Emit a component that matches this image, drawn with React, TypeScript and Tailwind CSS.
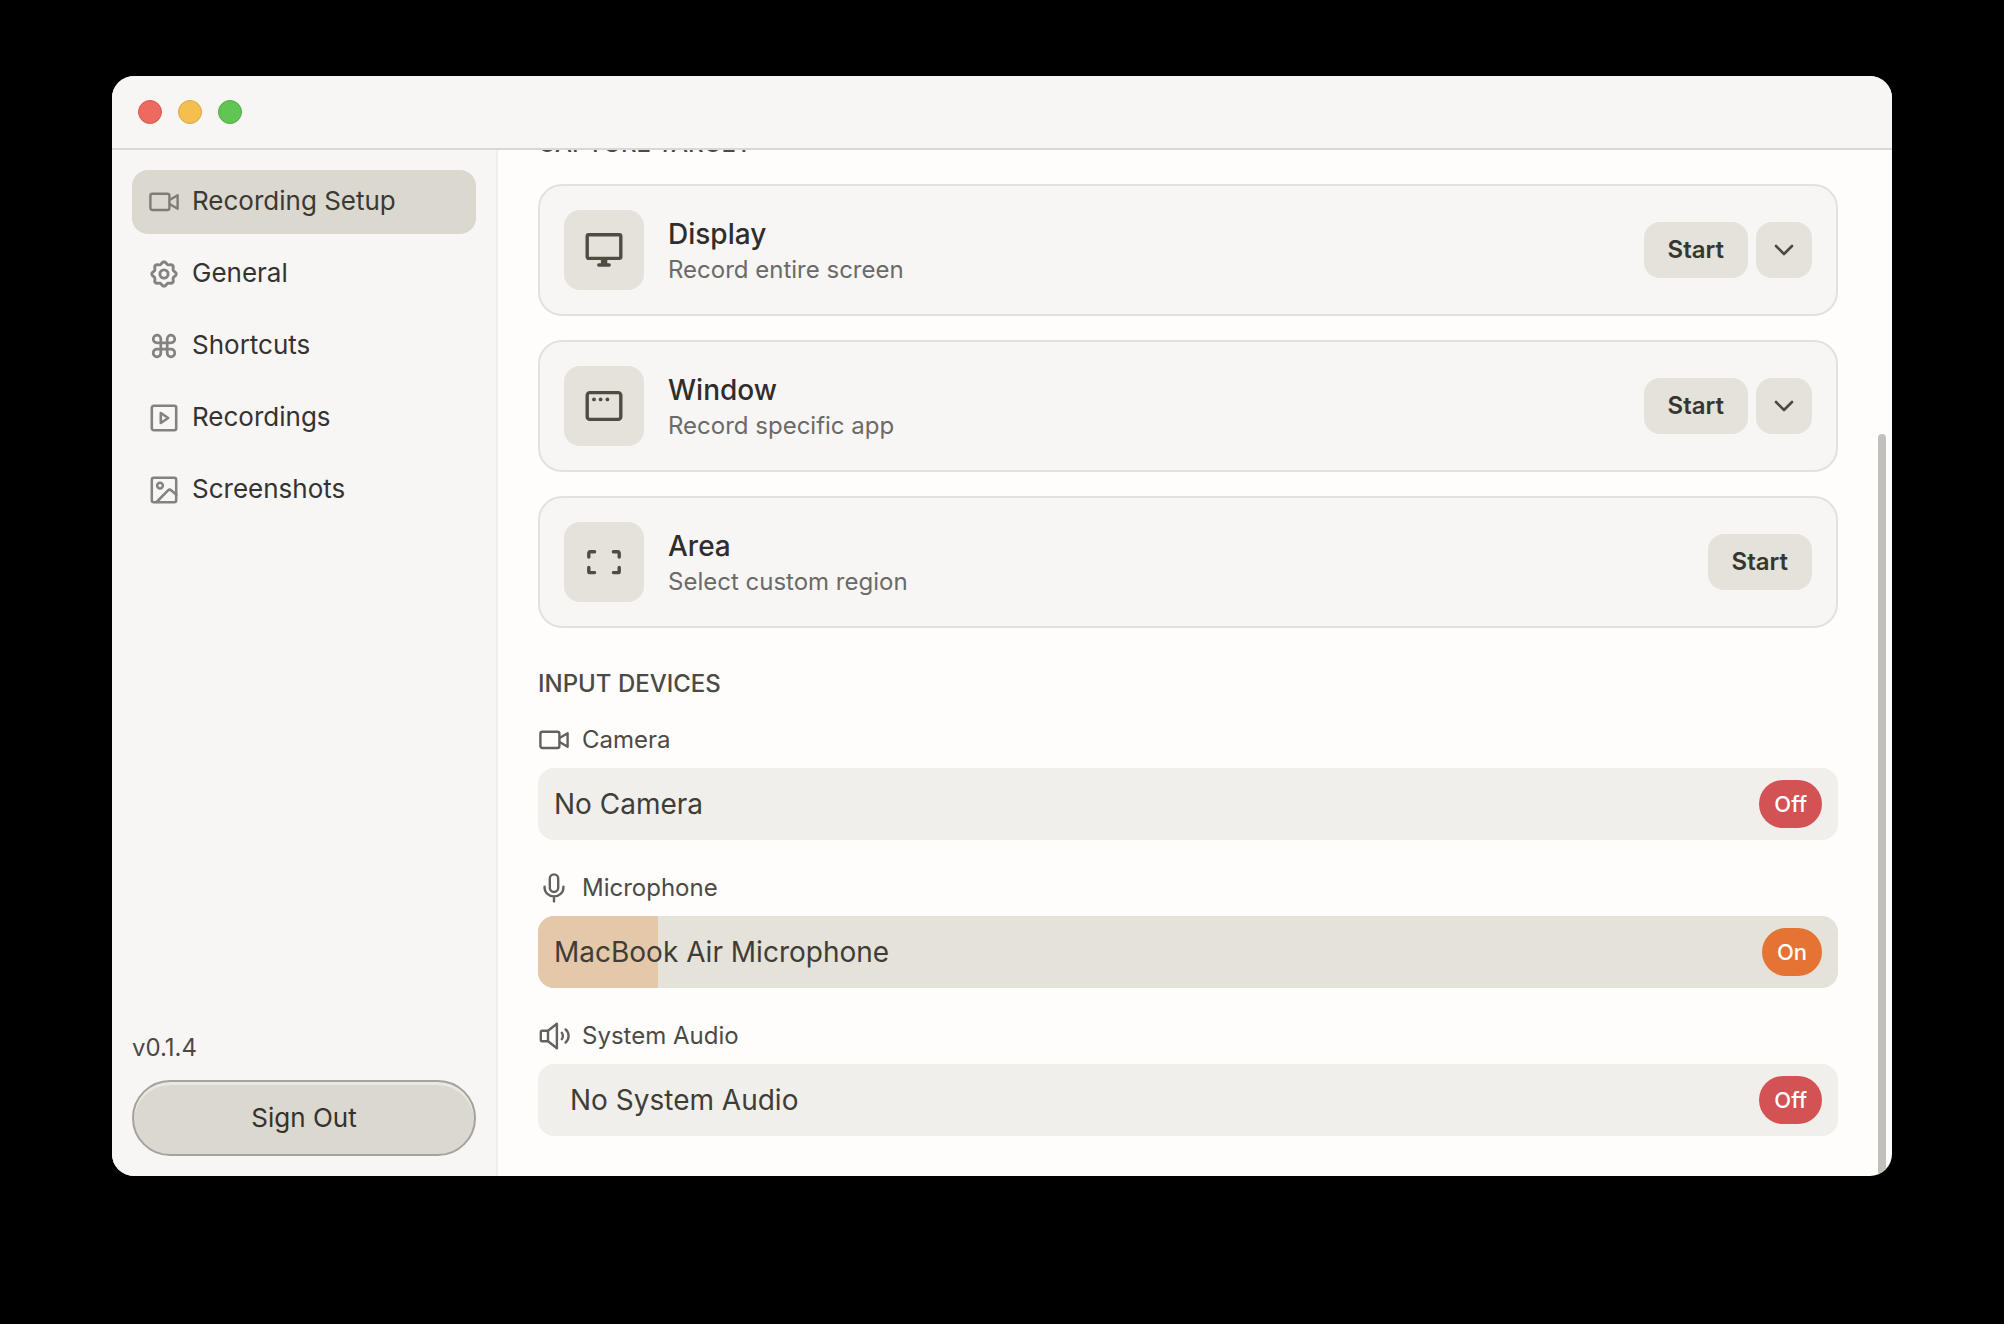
import type { ReactNode } from "react";

type IconProps = { className?: string };

function Stroke({ className, children, width = 2.6 }: IconProps & { children: ReactNode; width?: number }) {
  return (
    <svg
      aria-hidden="true"
      viewBox="0 0 32 32"
      fill="none"
      stroke="currentColor"
      strokeWidth={width}
      strokeLinecap="round"
      strokeLinejoin="round"
      className={className ?? "size-8 shrink-0"}
    >
      {children}
    </svg>
  );
}

const CameraIcon = () => (
  <Stroke width={2.4}>
    <rect x="2.4" y="7.8" width="19" height="16.2" rx="2" />
    <path d="M22 13.8l7.6-4.6v13.6L22 18.2" />
  </Stroke>
);

// Eight-lobed cog outline, sampled around the circle.
const cogPath =
  Array.from({ length: 96 }, (_, i) => {
    const a = (i / 96) * Math.PI * 2;
    const r = 11.1 + 1.1 * Math.cos(8 * a);
    return `${i ? "L" : "M"}${(16 + r * Math.sin(a)).toFixed(2)} ${(16 - r * Math.cos(a)).toFixed(2)}`;
  }).join("") + "Z";

const CogIcon = () => (
  <Stroke width={2.9}>
    <path d={cogPath} />
    <circle cx="16" cy="16" r="4.1" />
  </Stroke>
);

const CommandIcon = () => (
  <Stroke width={2.7}>
    <path d="M19.2 8.9v14.2a3.8 3.8 0 1 0 3.8-3.9H9a3.8 3.8 0 1 0 3.8 3.9V8.9A3.8 3.8 0 1 0 9 12.8h14a3.8 3.8 0 1 0-3.8-3.9Z" />
  </Stroke>
);

const PlayBoxIcon = () => (
  <Stroke>
    <rect x="3.8" y="3.8" width="24.4" height="24.4" rx="2" />
    <path d="M12.8 11v10l7.4-5z" />
  </Stroke>
);

const PictureIcon = () => (
  <Stroke width={2.5}>
    <rect x="3.8" y="3.8" width="24.4" height="24.4" rx="2" />
    <circle cx="12" cy="11.6" r="2.9" />
    <path d="M8.6 28L19.8 16.6a2.6 2.6 0 0 1 3.6-.1l5 4.3" />
  </Stroke>
);

const MicIcon = () => (
  <Stroke width={2.4}>
    <rect x="11.8" y="2.4" width="8.4" height="17.6" rx="4.2" />
    <path d="M6.6 14.6v1.2a9.4 8.6 0 0 0 18.8 0v-1.2M16 24.6v4.8" />
  </Stroke>
);

const SpeakerIcon = () => (
  <Stroke width={2.4}>
    <path d="M10 10.8H4.2a1.4 1.4 0 0 0-1.4 1.4v7.6a1.4 1.4 0 0 0 1.4 1.4H10l8.9 7V3.8zM10 10.8v10.4" />
    <path d="M23.8 12.8c1.4 1.6 1.4 4.8 0 6.4M27.6 9.4c4 3.6 4 9.6 0 13.2" />
  </Stroke>
);

const ChevronIcon = () => (
  <Stroke>
    <path d="M8 12l8 8 8-8" />
  </Stroke>
);

function TileSvg({ children }: { children: ReactNode }) {
  return (
    <svg
      aria-hidden="true"
      viewBox="0 0 40 40"
      fill="none"
      stroke="currentColor"
      strokeWidth="3.4"
      strokeLinecap="round"
      strokeLinejoin="round"
      className="size-10"
    >
      {children}
    </svg>
  );
}

const DisplayIcon = () => (
  <TileSvg>
    <rect x="3.2" y="4.8" width="33.6" height="23.6" rx="1.6" />
    <path d="M14.8 35h10.4" />
    <path d="M16.9 29h6.4v5.4h-6.4z" fill="currentColor" stroke="none" />
  </TileSvg>
);

const WindowIcon = () => (
  <TileSvg>
    <rect x="3.2" y="6.6" width="33.6" height="26.8" rx="2.6" />
    <g fill="currentColor" stroke="none">
      <circle cx="10" cy="13.4" r="1.9" />
      <circle cx="16.6" cy="13.4" r="1.9" />
      <circle cx="23.4" cy="13.4" r="1.9" />
    </g>
  </TileSvg>
);

const AreaIcon = () => (
  <TileSvg>
    <path d="M4.8 15V11a1.2 1.2 0 0 1 1.2-1.2h4.6M29.4 9.8H34a1.2 1.2 0 0 1 1.2 1.2v4M35.2 25.4v4a1.2 1.2 0 0 1-1.2 1.2h-4.6M10.6 30.6H6a1.2 1.2 0 0 1-1.2-1.2v-4" />
  </TileSvg>
);

const navItems = [
  { label: "Recording Setup", icon: <CameraIcon />, active: true },
  { label: "General", icon: <CogIcon />, active: false },
  { label: "Shortcuts", icon: <CommandIcon />, active: false },
  { label: "Recordings", icon: <PlayBoxIcon />, active: false },
  { label: "Screenshots", icon: <PictureIcon />, active: false },
];

const targets = [
  { title: "Display", detail: "Record entire screen", icon: <DisplayIcon />, menu: true },
  { title: "Window", detail: "Record specific app", icon: <WindowIcon />, menu: true },
  { title: "Area", detail: "Select custom region", icon: <AreaIcon />, menu: false },
];

const devices = [
  { label: "Camera", value: "No Camera", icon: <CameraIcon />, on: false, level: 0, inset: false },
  { label: "Microphone", value: "MacBook Air Microphone", icon: <MicIcon />, on: true, level: 9.2, inset: false },
  { label: "System Audio", value: "No System Audio", icon: <SpeakerIcon />, on: false, level: 0, inset: true },
];

function Sidebar() {
  return (
    <aside className="flex w-[386px] shrink-0 flex-col border-r-2 border-[#efeeec] bg-[#f7f6f5] p-5">
      <nav className="flex flex-col gap-2">
        {navItems.map((item) => (
          <a
            key={item.label}
            href="#"
            aria-current={item.active ? "page" : undefined}
            className={`flex h-16 items-center gap-3 rounded-2xl px-4 text-[26px] leading-8 ${
              item.active ? "bg-[#dbd8d0] text-[#3c3932]" : "text-[#343331]"
            }`}
          >
            <span className={item.active ? "text-[#7f7c76]" : "text-[#83827f]"}>{item.icon}</span>
            <span className="pb-0.5">{item.label}</span>
          </a>
        ))}
      </nav>
      <p className="mt-auto mb-4 text-2xl text-[#4a4947]">v0.1.4</p>
      <button
        type="button"
        className="h-[76px] rounded-full border-2 border-[#a5a39e] bg-[#dbd8d0] pb-0.5 text-[26px] text-[#35322c] shadow-[inset_0_3px_1px_#ebe9e4]"
      >
        Sign Out
      </button>
    </aside>
  );
}

function TargetCard({ title, detail, icon, menu }: (typeof targets)[number]) {
  return (
    <div className="flex items-center rounded-3xl border-2 border-[#e2e1de] bg-[#f7f6f5] p-6">
      <div className="grid size-20 shrink-0 place-items-center rounded-2xl bg-[#e4e2da] text-[#504c42]">{icon}</div>
      <div className="ml-6 flex-1 pt-1">
        <h3 className="text-[28px] leading-9 font-medium text-[#2f2e2c]">{title}</h3>
        <p className="text-2xl leading-9 text-[#6b6a67]">{detail}</p>
      </div>
      <div className="flex gap-2">
        <button type="button" className="h-14 rounded-2xl bg-[#e4e2da] px-6 text-2xl font-semibold text-[#38352e]">
          Start
        </button>
        {menu && (
          <button
            type="button"
            aria-label={`Choose ${title.toLowerCase()}`}
            className="grid size-14 place-items-center rounded-2xl bg-[#e4e2da] text-[#4c4942]"
          >
            <ChevronIcon />
          </button>
        )}
      </div>
    </div>
  );
}

function DeviceRow({ label, value, icon, on, level, inset }: (typeof devices)[number]) {
  return (
    <div className="flex flex-col gap-3">
      <div className="flex items-center gap-3 text-2xl leading-8 text-[#4b4a47]">
        <span className="text-[#62615d]">{icon}</span>
        {label}
      </div>
      <div
        className={`relative flex h-[72px] items-center overflow-hidden rounded-2xl pr-4 ${
          on ? "bg-[#e4e2d9]" : "bg-[#f0efec]"
        }`}
      >
        {on && <div className="absolute inset-y-0 left-0 bg-[#e5c8aa]" style={{ width: `${level}%` }} />}
        <button
          type="button"
          aria-label={`${label}: ${value}`}
          className={`relative h-full flex-1 text-left text-[28px] text-[#403d37] ${inset ? "pl-8" : "pl-4"}`}
        >
          {value}
        </button>
        <button
          type="button"
          aria-pressed={on}
          className={`relative h-12 rounded-full px-[15px] text-[22px] font-medium text-white ${
            on ? "bg-[#e57434]" : "bg-[#d35253]"
          }`}
        >
          {on ? "On" : "Off"}
        </button>
      </div>
    </div>
  );
}

export default function App() {
  return (
    <div className="flex h-screen bg-black px-28 pt-[76px] pb-[148px] font-['Inter',sans-serif]">
      <div className="flex min-w-0 flex-1 flex-col overflow-hidden rounded-[22px] bg-[#fefdfb]">
        <header className="flex h-[74px] shrink-0 items-center gap-4 border-b-2 border-[#d9d8d6] bg-[#f7f6f5] pl-[26px]">
          <button type="button" aria-label="Close" className="size-6 rounded-full border border-[#d65a50] bg-[#ec6a5e]" />
          <button type="button" aria-label="Minimize" className="size-6 rounded-full border border-[#dba942] bg-[#f4bf4f]" />
          <button type="button" aria-label="Zoom" className="size-6 rounded-full border border-[#54ac47] bg-[#61c554]" />
        </header>
        <div className="flex min-h-0 flex-1">
          <Sidebar />
          <main className="relative flex min-w-0 flex-1 flex-col justify-end gap-10 overflow-hidden pr-[54px] pb-10 pl-10">
            <section className="flex flex-col gap-6">
              <h2 className="text-2xl leading-8 font-medium text-[#4b4a47]">CAPTURE TARGET</h2>
              {targets.map((target) => (
                <TargetCard key={target.title} {...target} />
              ))}
            </section>
            <section className="flex flex-col gap-6">
              <h2 className="text-2xl leading-8 font-medium text-[#4b4a47]">INPUT DEVICES</h2>
              <div className="flex flex-col gap-8">
                {devices.map((device) => (
                  <DeviceRow key={device.label} {...device} />
                ))}
              </div>
            </section>
            <div className="absolute right-1.5 bottom-0 h-[742px] w-2 rounded-t-full bg-[#c2c0bc]" />
          </main>
        </div>
      </div>
    </div>
  );
}
